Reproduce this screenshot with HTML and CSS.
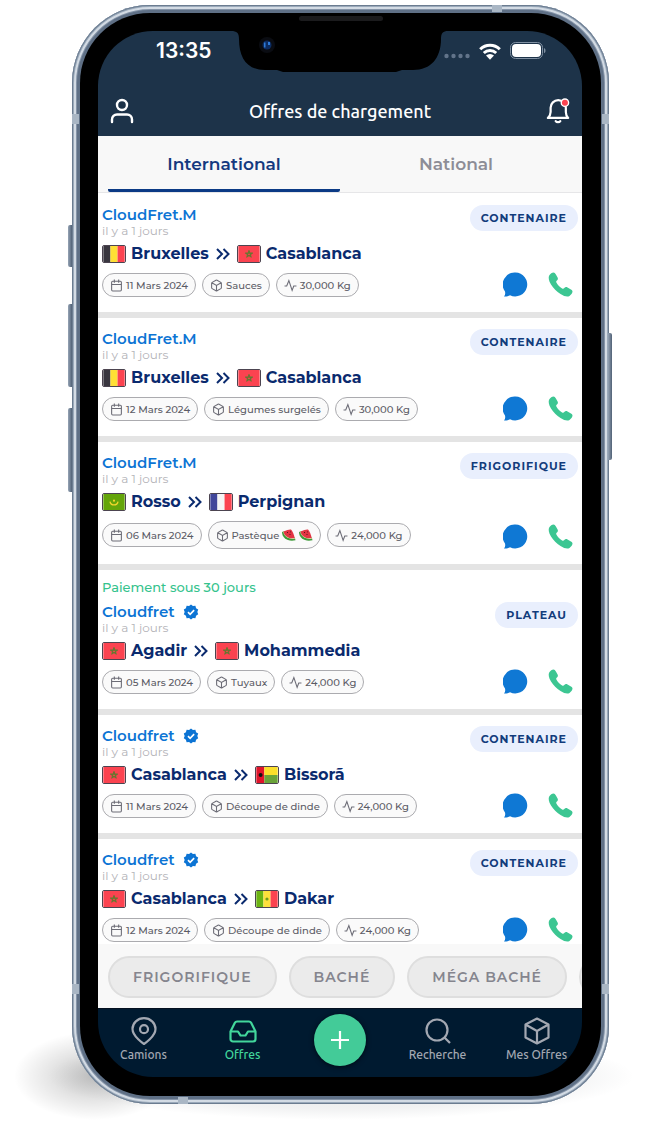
FILE: index.html
```html
<!DOCTYPE html>
<html lang="fr">
<head>
<meta charset="utf-8">
<meta name="viewport" content="width=device-width, initial-scale=1">
<title>Offres de chargement</title>
<link rel="stylesheet" href="styles.css">
</head>
<body>
<svg class="defs" aria-hidden="true">
  <symbol id="cal" viewBox="0 0 24 24"><rect x="3" y="4" width="18" height="18" rx="2"/><path d="M16 1v6M8 1v6M3 10h18"/></symbol>
  <symbol id="box" viewBox="0 0 24 24"><path d="M21 16V8a2 2 0 0 0-1-1.73l-7-4a2 2 0 0 0-2 0l-7 4A2 2 0 0 0 3 8v8a2 2 0 0 0 1 1.73l7 4a2 2 0 0 0 2 0l7-4A2 2 0 0 0 21 16zM3.3 7l8.7 5 8.7-5M12 22V12"/></symbol>
  <symbol id="pulse" viewBox="0 0 24 24"><path d="M1 13h4L9 3l6 18 3-8h5"/></symbol>
  <symbol id="chev" viewBox="0 0 14 14"><path d="M1 2l5 5-5 5M7.500 2l5 5-5 5"/></symbol>
  <symbol id="chat" viewBox="0 0 25 25"><path d="M12.500 0.500a12 12 0 1 1-5.500 22.800C5 24.500 3 24.700 1 24.500c1.200-1.500 1.500-3 1-5A12 12 0 0 1 12.500 0.500z"/></symbol>
  <symbol id="tel" viewBox="0 0 25 25"><path d="M1.200 3.500C2.500 1.500 4 .5 5.500.5c1 0 1.700.8 2.400 2l1.700 3c.7 1.400.2 2.300-.7 3.100-.8.700-.9 1.300-.4 2.200 1.400 2.300 3.200 4.200 5.600 5.600.9.500 1.500.4 2.200-.4.900-1 1.900-1.300 3.200-.6l3 1.800c1.300.7 2 1.400 2 2.400 0 1.500-1.100 3-3 4.300-1.700 1-5 .8-9-1.900C8.500 19.300 5.500 16.300 3 12.500.6 8.800.2 5.200 1.200 3.500z"/></symbol>
  <symbol id="check" viewBox="0 0 24 24"><path class="seal" d="M12 .8l2.900 2.300 3.700-.3 1 3.600 3.200 2-1.300 3.600 1.300 3.500-3.200 2.100-1 3.600-3.700-.3L12 23.200l-2.900-2.300-3.700.3-1-3.600-3.200-2.100L2.500 12 1.200 8.400l3.200-2 1-3.600 3.700.3z"/><path class="tick" d="M7.500 12.300l3.200 3.200 6-6.300"/></symbol>
  <symbol id="be" viewBox="0 0 24 18"><path fill="#39363f" d="M0 0h8v18H0z"/><path fill="#ffdf35" d="M8 0h8v18H8z"/><path fill="#fb4350" d="M16 0h8v18h-8z"/></symbol>
  <symbol id="ma" viewBox="0 0 24 18"><path fill="#fb4350" d="M0 0h24v18H0z"/><path fill="none" stroke="#6a7530" stroke-width="1.200" stroke-linejoin="round" d="M12 5l2.500 7.500L8 8h8l-6.500 4.500z"/></symbol>
  <symbol id="mr" viewBox="0 0 24 18"><path fill="#64a50a" d="M0 0h24v18H0z"/><path fill="none" stroke="#f0d52c" stroke-width="1.500" d="M7.500 8.500c1 5 8 5 9 0"/><circle cx="12" cy="7.500" r="1.200" fill="#f0d52c"/></symbol>
  <symbol id="fr" viewBox="0 0 24 18"><path fill="#41479b" d="M0 0h8v18H0z"/><path fill="#f5f5f5" d="M8 0h8v18H8z"/><path fill="#fb4350" d="M16 0h8v18h-8z"/></symbol>
  <symbol id="gw" viewBox="0 0 24 18"><path fill="#e0142a" d="M0 0h9v18H0z"/><path fill="#fbdf2a" d="M9 0h15v9H9z"/><path fill="#6aa338" d="M9 9h15v9H9z"/><circle cx="4.800" cy="9" r="2.200" fill="#111"/></symbol>
  <symbol id="sn" viewBox="0 0 24 18"><path fill="#6cb313" d="M0 0h8v18H0z"/><path fill="#ffe03b" d="M8 0h8v18H8z"/><path fill="#fb4350" d="M16 0h8v18h-8z"/><circle cx="12" cy="9" r="1.800" fill="#6f9a1e"/></symbol>
  <symbol id="melon" viewBox="0 0 14 12"><path fill="#3f9a3a" d="M0 3c0 6 6 10 13.500 8.200l-.6-2.400L2.500 2z"/><path fill="#d9efb8" d="M1.200 2.600c.6 5 5.500 8.200 11.800 7.200l-.4-1.500L3 2z"/><path fill="#e23543" d="M1.500 2.500C5 1 8 0 9 .6c1.500 1.400 3 5 3.800 8.600C7 10 2.300 7.500 1.500 2.500z"/><path stroke="#551a1c" stroke-width="1" d="M5.500 3v1M8 5v1M8.500 2.500v.8"/></symbol>
</svg>

<main class="page">
  <div class="shadow"></div>
  <div class="phone">
    <i class="key mute"></i><i class="key vol-up"></i><i class="key vol-down"></i><i class="key power"></i>
    <i class="band band-l hi"></i><i class="band band-l lo"></i><i class="band band-r hi"></i><i class="band band-r lo"></i>
    <i class="band-h hi"></i><i class="band-h lo"></i>
    <div class="bezel">
      <i class="speaker"></i>
      <div class="screen">
        <svg class="notch" viewBox="0 0 217 42" aria-hidden="true"><path d="M0 0C6 0 8 2 8 8C8 27 16 39 34 39H46L52 41H165L171 39H182C200 39 210 27 210 8C210 2 212 0 217 0Z"/><circle cx="36" cy="14" r="8" fill="#0a0c12"/><circle cx="36" cy="14" r="4.500" fill="#0c2c62"/><path fill="#2d7ad8" d="M33 11.500h1.500v5H33zM37 11h2v3h-2z"/></svg>
        <header class="top">
          <div class="status">
            <span class="clock">13:35</span>
            <div class="signals">
              <svg class="dots" width="26" height="6" viewBox="0 0 26 6" fill="#62748a"><circle cx="2.500" cy="3" r="2.200"/><circle cx="9.500" cy="3" r="2.200"/><circle cx="16.500" cy="3" r="2.200"/><circle cx="23.500" cy="3" r="2.200"/></svg>
              <svg width="22" height="17" viewBox="0 0 22 17" fill="none" stroke="#fff" stroke-width="3"><path d="M1.200 6.200a14 14 0 0 1 19.600 0M4.800 10a9 9 0 0 1 12.400 0"/><path fill="#fff" stroke="none" d="M7 12.600a6 6 0 0 1 8 0l-4 4.200z"/></svg>
              <svg width="36" height="18" viewBox="0 0 36 18"><rect x=".5" y=".5" width="32" height="16" rx="5" fill="none" stroke="#8090a2"/><rect x="2" y="2" width="29" height="13" rx="4" fill="#fff"/><path d="M34 6c2 .7 2 4.500 0 5.200z" fill="#8090a2"/></svg>
            </div>
          </div>
          <div class="bar">
            <button class="plain" aria-label="Profil"><svg width="24" height="26" viewBox="0 0 24 26" fill="none" stroke="#fff" stroke-width="2.400" stroke-linecap="round"><circle cx="12" cy="7" r="5"/><path d="M2 24v-2.500a5 5 0 0 1 5-5h10a5 5 0 0 1 5 5V24"/></svg></button>
            <h1>Offres de chargement</h1>
            <button class="plain" aria-label="Notifications"><svg width="24" height="28" viewBox="0 0 26 28" fill="none" stroke="#fff" stroke-width="2.400" stroke-linecap="round" stroke-linejoin="round"><path d="M2 21.500h22c-2-2-2.500-4-2.500-6.500v-4.500a8 8 0 0 0-16.500 0V15c0 2.500-1 4.500-3 6.500z"/><path d="M10.500 25c1 1.500 4 1.500 5 0"/><circle cx="20.500" cy="5" r="4" fill="#fb4350" stroke-width="1.500"/></svg></button>
          </div>
        </header>
        <nav class="tabs"><button class="tab on">International</button><button class="tab">National</button></nav>

        <section class="list">
          <article class="card">
            <div class="info">
              <a class="name" href="#">CloudFret.M</a>
              <span class="ago">il y a 1 jours</span>
              <div class="route"><svg class="flag"><use href="#be"/></svg><b>Bruxelles</b><svg class="chev"><use href="#chev"/></svg><svg class="flag"><use href="#ma"/></svg><b>Casablanca</b></div>
              <div class="pills"><span class="pill"><svg><use href="#cal"/></svg>11 Mars 2024</span><span class="pill"><svg><use href="#box"/></svg>Sauces</span><span class="pill"><svg><use href="#pulse"/></svg>30,000 Kg</span></div>
            </div>
            <div class="side"><span class="badge">CONTENAIRE</span><div class="acts"><button class="plain chat" aria-label="Message"><svg><use href="#chat"/></svg></button><button class="plain tel" aria-label="Appeler"><svg><use href="#tel"/></svg></button></div></div>
          </article>
          <article class="card">
            <div class="info">
              <a class="name" href="#">CloudFret.M</a>
              <span class="ago">il y a 1 jours</span>
              <div class="route"><svg class="flag"><use href="#be"/></svg><b>Bruxelles</b><svg class="chev"><use href="#chev"/></svg><svg class="flag"><use href="#ma"/></svg><b>Casablanca</b></div>
              <div class="pills"><span class="pill"><svg><use href="#cal"/></svg>12 Mars 2024</span><span class="pill"><svg><use href="#box"/></svg>Légumes surgelés</span><span class="pill"><svg><use href="#pulse"/></svg>30,000 Kg</span></div>
            </div>
            <div class="side"><span class="badge">CONTENAIRE</span><div class="acts"><button class="plain chat" aria-label="Message"><svg><use href="#chat"/></svg></button><button class="plain tel" aria-label="Appeler"><svg><use href="#tel"/></svg></button></div></div>
          </article>
          <article class="card">
            <div class="info">
              <a class="name" href="#">CloudFret.M</a>
              <span class="ago">il y a 1 jours</span>
              <div class="route"><svg class="flag"><use href="#mr"/></svg><b>Rosso</b><svg class="chev"><use href="#chev"/></svg><svg class="flag"><use href="#fr"/></svg><b>Perpignan</b></div>
              <div class="pills"><span class="pill"><svg><use href="#cal"/></svg>06 Mars 2024</span><span class="pill tall"><svg><use href="#box"/></svg>Pastèque<svg class="melon"><use href="#melon"/></svg><svg class="melon"><use href="#melon"/></svg></span><span class="pill"><svg><use href="#pulse"/></svg>24,000 Kg</span></div>
            </div>
            <div class="side"><span class="badge">FRIGORIFIQUE</span><div class="acts"><button class="plain chat" aria-label="Message"><svg><use href="#chat"/></svg></button><button class="plain tel" aria-label="Appeler"><svg><use href="#tel"/></svg></button></div></div>
          </article>
          <article class="card">
            <p class="terms">Paiement sous 30 jours</p>
            <div class="info">
              <a class="name" href="#">Cloudfret<svg><use href="#check"/></svg></a>
              <span class="ago">il y a 1 jours</span>
              <div class="route"><svg class="flag"><use href="#ma"/></svg><b>Agadir</b><svg class="chev"><use href="#chev"/></svg><svg class="flag"><use href="#ma"/></svg><b>Mohammedia</b></div>
              <div class="pills"><span class="pill"><svg><use href="#cal"/></svg>05 Mars 2024</span><span class="pill"><svg><use href="#box"/></svg>Tuyaux</span><span class="pill"><svg><use href="#pulse"/></svg>24,000 Kg</span></div>
            </div>
            <div class="side"><span class="badge">PLATEAU</span><div class="acts"><button class="plain chat" aria-label="Message"><svg><use href="#chat"/></svg></button><button class="plain tel" aria-label="Appeler"><svg><use href="#tel"/></svg></button></div></div>
          </article>
          <article class="card">
            <div class="info">
              <a class="name" href="#">Cloudfret<svg><use href="#check"/></svg></a>
              <span class="ago">il y a 1 jours</span>
              <div class="route"><svg class="flag"><use href="#ma"/></svg><b>Casablanca</b><svg class="chev"><use href="#chev"/></svg><svg class="flag"><use href="#gw"/></svg><b>Bissorã</b></div>
              <div class="pills"><span class="pill"><svg><use href="#cal"/></svg>11 Mars 2024</span><span class="pill"><svg><use href="#box"/></svg>Découpe de dinde</span><span class="pill"><svg><use href="#pulse"/></svg>24,000 Kg</span></div>
            </div>
            <div class="side"><span class="badge">CONTENAIRE</span><div class="acts"><button class="plain chat" aria-label="Message"><svg><use href="#chat"/></svg></button><button class="plain tel" aria-label="Appeler"><svg><use href="#tel"/></svg></button></div></div>
          </article>
          <article class="card">
            <div class="info">
              <a class="name" href="#">Cloudfret<svg><use href="#check"/></svg></a>
              <span class="ago">il y a 1 jours</span>
              <div class="route"><svg class="flag"><use href="#ma"/></svg><b>Casablanca</b><svg class="chev"><use href="#chev"/></svg><svg class="flag"><use href="#sn"/></svg><b>Dakar</b></div>
              <div class="pills"><span class="pill"><svg><use href="#cal"/></svg>12 Mars 2024</span><span class="pill"><svg><use href="#box"/></svg>Découpe de dinde</span><span class="pill"><svg><use href="#pulse"/></svg>24,000 Kg</span></div>
            </div>
            <div class="side"><span class="badge">CONTENAIRE</span><div class="acts"><button class="plain chat" aria-label="Message"><svg><use href="#chat"/></svg></button><button class="plain tel" aria-label="Appeler"><svg><use href="#tel"/></svg></button></div></div>
          </article>
        </section>

        <div class="filters"><button class="chip">FRIGORIFIQUE</button><button class="chip">BACHÉ</button><button class="chip">MÉGA BACHÉ</button><button class="chip"></button></div>

        <nav class="dock">
          <a href="#"><svg viewBox="0 0 28 28"><path d="M14 27S2.500 19.500 2.500 12a11.500 10.800 0 0 1 23 0C25.500 19.500 14 27 14 27z"/><circle cx="14" cy="12.200" r="4"/></svg>Camions</a>
          <a href="#" class="on"><svg viewBox="0 0 28 28"><path d="M1.500 14.500L6 5.500Q6.600 4.500 8 4.500h12q1.400 0 2 1l4.500 9V22a2.500 2.500 0 0 1-2.500 2.500H4A2.500 2.500 0 0 1 1.500 22zM1.500 14.500H9l2.500 4h5l2.500-4h7.500"/></svg>Offres</a>
          <button class="add" aria-label="Ajouter"><svg viewBox="0 0 24 24"><path d="M12 3v18M3 12h18"/></svg></button>
          <a href="#"><svg viewBox="0 0 28 28"><circle cx="13" cy="13" r="10.500"/><path d="M20.500 20.500l5.500 5.500"/></svg>Recherche</a>
          <a href="#"><svg viewBox="0 0 28 28"><path d="M14 1.500l11.500 6v13L14 26.500l-11.500-6v-13zM2.500 7.500L14 14l11.500-6.500M14 14v12.500"/></svg>Mes Offres</a>
        </nav>
      </div>
    </div>
  </div>
</main>
</body>
</html>
```
FILE: styles.css
```css
* { box-sizing: border-box; }
body { margin: 0; background: #fff; font-family: Montserrat, Inter, "Open Sans", sans-serif; }
h1, p { margin: 0; }
a { text-decoration: none; }
button { font: inherit; cursor: pointer; }
svg { display: block; flex: none; }
.defs { position: absolute; width: 0; height: 0; }
.plain { padding: 0; border: 0; background: none; }

.page { position: relative; display: flex; height: 100vh; min-height: 700px; padding: 5px 59px 38px 72px; overflow: hidden; }
.shadow {
  position: absolute; left: 0; right: 0; bottom: 16px; height: 100px;
  background:
    radial-gradient(ellipse 80px 44px at 94px 50px, rgba(0,0,0,.24), rgba(0,0,0,.1) 55%, transparent),
    radial-gradient(ellipse 44% 44px at 51% 50px, rgba(20,30,40,.14), rgba(20,30,40,.06) 75%, transparent);
}

/* phone body */
.phone {
  position: relative; flex: 1; min-width: 0; padding: 8px; border-radius: 78px;
  background: #5f7086;
  box-shadow: inset 0 0 0 1px #6b7c90, inset 0 0 0 2px #9aa9ba, inset 0 0 0 4px #d3dbe4, inset 0 0 0 5px #8493a7;
}
.bezel { position: relative; height: 100%; padding: 18px 19px 19px 18px; border-radius: 70px; background: #000; }
.key { position: absolute; left: -4px; width: 4px; border-radius: 2px 0 0 2px; background: linear-gradient(90deg, #97a5b6, #506176); }
.mute { top: 220px; height: 42px; }
.vol-up { top: 299px; height: 83px; }
.vol-down { top: 403px; height: 84px; }
.power { left: auto; right: -3px; top: 328px; width: 4px; height: 127px; border-radius: 0 2px 2px 0; }
.band { position: absolute; width: 7px; height: 10px; background: #a9b6c4; }
.band-l { left: 0; }
.band-r { right: 0; }
.band.hi { top: 109px; }
.band.lo { bottom: 110px; }
.band-h { position: absolute; width: 10px; height: 7px; background: #a9b6c4; }
.band-h.hi { top: 0; right: 107px; }
.band-h.lo { bottom: 0; left: 106px; }
.speaker { position: absolute; top: 3px; left: 50%; width: 84px; height: 5px; margin-left: -42px; border-radius: 3px; background: #1b1b1d; }
.screen { position: relative; display: flex; flex-direction: column; height: 100%; overflow: hidden; border-radius: 55px; background: #000; }
.notch { position: absolute; top: 0; left: 50%; width: 217px; height: 42px; margin-left: -109px; }

/* header */
.top { height: 105px; background: #1d3349; color: #fff; }
.status { display: flex; justify-content: space-between; align-items: center; height: 40px; padding: 0 36px 0 58px; }
.clock { font: 600 21px/24px Inter, sans-serif; }
.signals { display: flex; align-items: center; gap: 9px; }
.dots { margin-top: 10px; }
.bar { display: flex; justify-content: space-between; align-items: center; height: 46px; margin-top: 17px; padding: 0 12px; }
h1 { font: 500 18px/24px Ubuntu, "Noto Sans", sans-serif; }

.tabs { display: flex; height: 57px; padding: 0 10px; background: #f8f8f8; border-bottom: 1px solid #e6e6e8; }
.tab { flex: 1; padding: 3px 0 0; border: 0; border-bottom: 3px solid transparent; background: none; color: #8d8d96; font-size: 17px; font-weight: 600; }
.tab.on { color: #14397f; border-bottom-color: #0b3a85; border-radius: 2px; }

/* offers */
.list { flex: 1; min-height: 0; overflow: hidden; padding-top: 1px; background: #fff; }
.card { display: flex; flex-wrap: wrap; justify-content: space-between; padding: 11px 4px 15px; border-bottom: 6px solid #e4e4e4; }
.terms { width: 100%; margin-bottom: 9px; color: #35c38d; font-size: 13px; line-height: 12px; font-weight: 500; }
.info { display: flex; flex-direction: column; align-items: flex-start; }
.name { display: flex; align-items: center; gap: 8px; color: #0c74d4; font-size: 15px; line-height: 20px; font-weight: 600; }
.name svg { width: 16px; height: 16px; }
.seal { fill: #0c74d4; }
.tick { fill: none; stroke: #fff; stroke-width: 2.5; }
.ago { color: #b3b3b8; font-size: 12px; line-height: 12px; }
.route { display: flex; align-items: center; height: 20px; margin: 7px 0 9px; color: #0a2a6e; font-size: 16px; line-height: 20px; }
.route b { font-weight: 700; }
.flag { width: 24px; height: 18px; margin-right: 5px; border: 1px solid #4c4450; border-radius: 2px; }
.chev { width: 14px; height: 14px; margin: 0 7px; fill: none; stroke: #0a2a6e; stroke-width: 2; }
.pills { display: flex; align-items: center; gap: 6px; }
.pill {
  display: flex; align-items: center; gap: 3px; height: 24px; padding: 0 7px;
  border: 1px solid #ababaf; border-radius: 14px; background: #fafafa;
  color: #5c5c66; font-size: 10px; font-weight: 500; white-space: nowrap;
}
.pill svg { width: 13px; height: 13px; fill: none; stroke: #6c6c76; stroke-width: 2; }
.pill .melon { width: 14px; height: 12px; stroke: none; }
.tall { height: 28px; }
.side { display: flex; flex-direction: column; align-items: flex-end; justify-content: space-between; }
.badge {
  height: 26px; padding: 0 11px; border-radius: 13px; background: #e9effd;
  color: #123c7c; font-size: 11px; line-height: 26px; font-weight: 700; letter-spacing: 1px;
}
.acts { display: flex; gap: 20px; padding-right: 5px; }
.acts svg { width: 25px; height: 25px; }
.chat { fill: #0f78d4; }
.tel { fill: #3cc692; }

/* filters */
.filters { display: flex; gap: 12px; height: 64px; padding: 12px 10px; overflow: hidden; background: #f8f8f8; }
.chip {
  flex: none; min-width: 60px; height: 42px; padding: 0 23px; border: 2px solid #dedede; border-radius: 21px;
  background: #ebebeb; color: #85858e; font-size: 14px; font-weight: 600; letter-spacing: 1px;
}

/* bottom bar */
.dock { display: flex; height: 69px; margin: 0 -4px; background: #001a30; border-top: 1px solid #04101f; font: 500 12px/14px Ubuntu, "Noto Sans", sans-serif; }
.dock a { flex: 1; display: flex; flex-direction: column; align-items: center; gap: 3px; padding-top: 8px; color: #a3a8b2; white-space: nowrap; }
.dock svg { width: 28px; height: 28px; fill: none; stroke: currentColor; stroke-width: 2.2; stroke-linejoin: round; }
.dock a.on { color: #42d79c; }
.add { display: grid; place-items: center; flex: none; width: 52px; height: 52px; margin: 5px 22px 0; padding: 0; border: 0; border-radius: 50%; background: #43cb98; color: #fff; box-shadow: 0 1px 5px #000a14; }
.dock .add svg { width: 24px; height: 24px; }
```
